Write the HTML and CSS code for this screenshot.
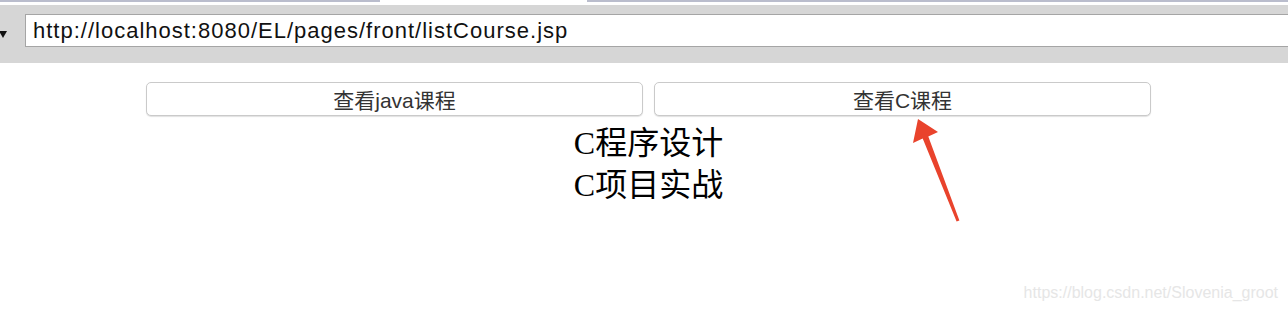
FILE: index.html
```html
<!DOCTYPE html>
<html lang="zh">
<head>
  <meta charset="UTF-8">
  <title>listCourse</title>
  <link rel="stylesheet" href="styles.css">
</head>
<body>
  <div class="tabstrip">
    <span class="tab"></span>
    <span class="tab current"></span>
    <span class="tab rest"></span>
  </div>
  <div class="toolbar">
    <span class="drop"></span>
    <div class="address">http://localhost:8080/EL/pages/front/listCourse.jsp</div>
  </div>

  <div class="page">
    <div class="buttons">
      <button class="btn">查看java课程</button>
      <button class="btn">查看C课程</button>
    </div>
    <div class="courses">
      <div class="course">C程序设计</div>
      <div class="course">C项目实战</div>
    </div>
  </div>

  <svg class="mark" width="70" height="120" viewBox="0 0 70 120">
    <polygon fill="#e9432c" points="18,9 38,22 28.3,26.4 59.4,110.5 56.6,111.5 22.7,28.6 13,33"/>
  </svg>

  <div class="watermark">https://blog.csdn.net/Slovenia_groot</div>
</body>
</html>
```

FILE: styles.css
```css
body {
  margin: 0;
  font-family: "Liberation Sans", Arial, sans-serif;
  background: #fff;
  overflow: hidden;
}
.tabstrip {
  display: flex;
  height: 5px;
  background: #fff;
}
.tab {
  width: 380px;
  height: 2px;
  background: #babdcd;
}
.tab.current { width: 207px; background: #fff; }
.tab.rest { flex: 1; }
.toolbar {
  display: flex;
  align-items: flex-start;
  gap: 18px;
  height: 58px;
  background: #d6d6d6;
  overflow: hidden;
}
.drop {
  width: 0;
  height: 0;
  border-left: 4px solid transparent;
  border-right: 4px solid transparent;
  border-top: 7px solid #111;
  margin-top: 26px;
  margin-left: -1px;
}
.address {
  flex: none;
  width: 1300px;
  height: 31px;
  margin-top: 9px;
  border: 1px solid #a5a5a5;
  background: #fff;
  padding-left: 7px;
  font-size: 22px;
  letter-spacing: 1px;
  line-height: 32px;
  color: #111;
}
.page {
  width: 1005px;
  margin-left: 146px;
  padding-top: 19px;
}
.buttons {
  display: flex;
  gap: 11px;
}
.btn {
  flex: 1;
  height: 34px;
  border: 1px solid #cacaca;
  border-radius: 5px;
  background: #fff;
  box-shadow: 0 1px 1px rgba(0, 0, 0, 0.12);
  font-family: "Liberation Sans", "Noto Sans CJK SC", sans-serif;
  font-size: 21px;
  color: #333;
  padding: 0;
}
.courses {
  padding-top: 6px;
  text-align: center;
}
.course {
  font-family: "Liberation Serif", "Noto Sans CJK SC", serif;
  font-size: 32px;
  line-height: 42px;
  color: #000;
}
.mark {
  position: absolute;
  left: 900px;
  top: 110px;
}
.watermark {
  position: absolute;
  right: 10px;
  bottom: 10px;
  font-size: 16px;
  color: #e6e6e6;
}
```
